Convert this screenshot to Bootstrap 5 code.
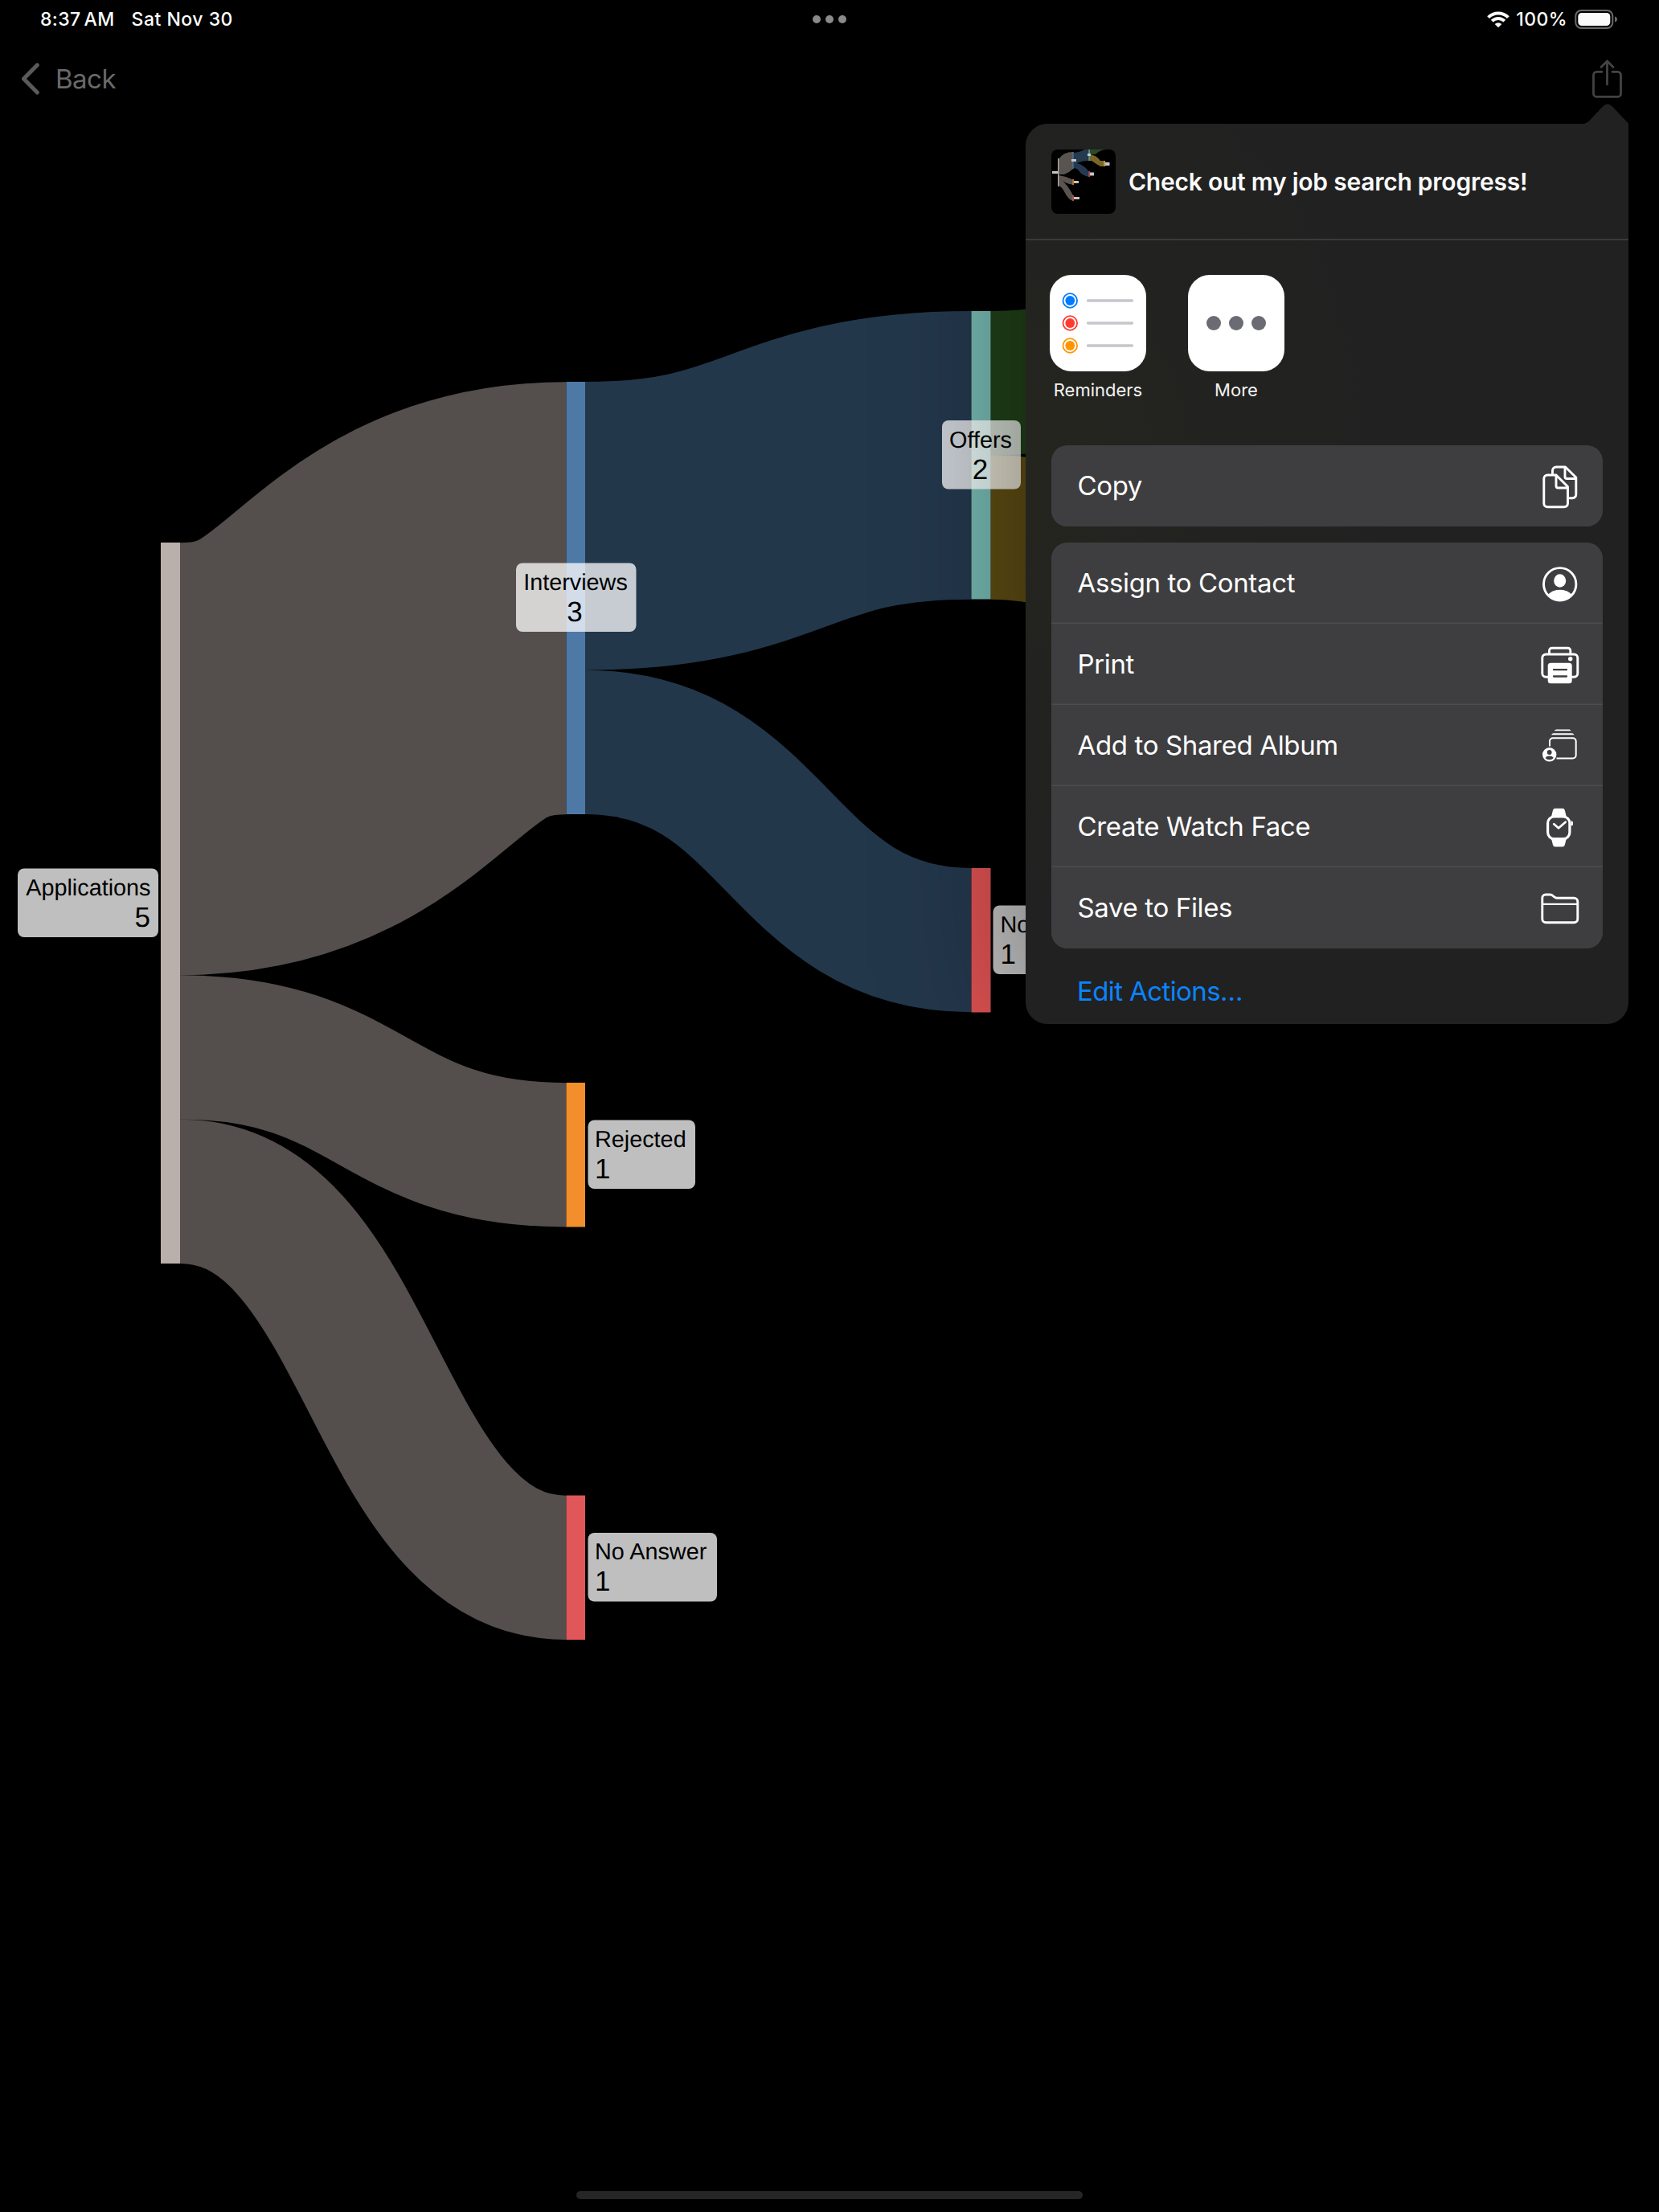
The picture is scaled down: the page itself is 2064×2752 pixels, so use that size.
<!DOCTYPE html>
<html lang="en" data-bs-theme="dark">
<head>
<meta charset="utf-8">
<meta name="viewport" content="width=device-width, initial-scale=1">
<title>Job Search Progress</title>
<link href="https://cdn.jsdelivr.net/npm/bootstrap@5.3.0/dist/css/bootstrap.min.css" rel="stylesheet">
<style>
  body { background:#000; font-family:Inter,"Noto Sans",sans-serif; width:2064px; height:2752px; overflow:hidden; color:#fff; }
  .statusbar { height:48px; padding:0 51px 0 50px; font-size:23px; font-weight:500; line-height:48px; }
  .clock { letter-spacing:.35px; margin-right:21px; }
  .today { letter-spacing:.5px; }
  .charge { letter-spacing:.4px; }
  .topbar { height:92px; padding:8px 45px 0 26px; }
  .back-link { font-size:33px; line-height:40px; letter-spacing:-.5px; color:#696969; text-decoration:none; }
  .flow { display:block; width:2064px; height:2560px; }
  .flow text { font-family:"Liberation Sans",Arial,sans-serif; fill:#000; text-rendering:geometricPrecision; }
  .flow .nm { font-size:28.8px; }
  .flow .ct { font-size:35px; }
  .homebar { width:630px; height:10px; border-radius:5px; background:#262626; margin:26px auto 0; }
  .sheet { position:absolute; left:1276px; top:154px; width:750px; height:1120px; border-radius:27px 0 27px 27px; background:radial-gradient(ellipse 420px 560px at 4% 38%,#25251f,#222320 50%,#212121 100%); box-shadow:0 0 180px rgba(0,0,0,.4); }
  .sheet-tip { position:absolute; right:0; top:-26px; }
  .sheet-head { height:145px; padding:0 32px; border-bottom:2px solid #393a3a; }
  .sheet-title { font-size:30px; font-weight:600; letter-spacing:-.24px; color:#fafafa; line-height:36px; margin-left:16px; }
  .apps { padding:43px 30px 0; gap:52px; height:255px; }
  .app-tile { width:120px; }
  .app-tile svg { display:block; }
  .app-name { font-size:22px; line-height:28px; margin-top:9px; color:#f2f2f2; }
  .actions { margin:0 32px; border-radius:20px; background:#3e3e40; overflow:hidden; --bs-list-group-bg:#3e3e40; --bs-list-group-border-width:0; }
  .actions .list-group-item { height:101px; padding:0 28px 0 32.5px; font-size:33px; letter-spacing:-.36px; color:#fff; background:#3e3e40; }
  .actions .list-group-item:not(:last-child) { box-shadow:inset 0 -1.5px #4c4c4e; }
  .edit-link { font-size:33px; line-height:40px; letter-spacing:-.6px; color:#0a84ff; text-decoration:none; margin:33px 0 0 64px; display:inline-block; }
</style>
</head>
<body class="d-flex flex-column position-relative">
<header>
  <div class="statusbar d-flex align-items-center justify-content-between position-relative">
    <div class="d-flex"><span class="clock">8:37&#8198;AM</span><span class="today">Sat Nov 30</span></div>
    <svg class="position-absolute" style="left:1010px;top:18px" width="44" height="12"><g fill="#8a8a8a"><circle cx="6" cy="6" r="5"/><circle cx="22" cy="6" r="5"/><circle cx="38" cy="6" r="5"/></g></svg>
    <div class="d-flex align-items-center">
      <svg width="30" height="22" viewBox="0 0 30 22" style="margin-right:7px"><g fill="none" stroke="#fff" stroke-width="4"><path d="M2.600 8.600A17.500 17.500 0 0 1 27.400 8.600"/><path d="M7.200 13.200A11 11 0 0 1 22.800 13.200"/></g><path d="M15 21.300l-4.300-4.400a6.100 6.100 0 0 1 8.600 0z" fill="#fff"/></svg>
      <span class="charge">100%</span>
      <svg width="54" height="26" viewBox="0 0 54 26" style="margin-left:9px"><rect x="1.300" y="2" width="46" height="22" rx="7" fill="none" stroke="#6c6c6c" stroke-width="2"/><rect x="4.300" y="5" width="40" height="16" rx="4.500" fill="#fff"/><path d="M50 9.500q3 1 3 3.500t-3 3.500z" fill="#6c6c6c"/></svg>
    </div>
  </div>
  <nav class="topbar d-flex align-items-center justify-content-between">
    <a href="#" class="back-link d-flex align-items-center"><svg width="25" height="42" viewBox="0 0 25 42" style="margin-right:18px"><path d="M20.300 4L3.500 21l16.800 17" fill="none" stroke="#5a5a5a" stroke-width="5" stroke-linecap="round" stroke-linejoin="round"/></svg><span>Back</span></a>
    <svg width="39" height="50" viewBox="0 0 39 50"><g fill="none" stroke="#484848" stroke-width="2.800" stroke-linecap="round" stroke-linejoin="round"><path d="M13 16.400H6.500a4 4 0 0 0-4 4v23a4 4 0 0 0 4 4h26a4 4 0 0 0 4-4v-23a4 4 0 0 0-4-4H26"/><path d="M19.500 32V3M12 10.500L19.500 3l7.500 7.500"/></g></svg>
  </nav>
</header>
<main>
  <svg class="flow" viewBox="0 140 2064 2560">
    <g fill="none" stroke="#bbb0a8" stroke-opacity=".45">
      <path stroke-width="538" d="M224 944.200C464 944.200 464 744.200 704.500 744.200"/>
      <path stroke-width="179.300" d="M224 1303C464 1303 464 1436.800 704.500 1436.800"/>
      <path stroke-width="179.300" d="M224 1482.300C464 1482.300 464 1950.300 704.500 1950.300"/>
    </g>
    <g fill="none" stroke="#4e79a7" stroke-opacity=".45">
      <path stroke-width="358.700" d="M728 654.300C968 654.300 968 566.300 1208.500 566.300"/>
      <path stroke-width="179.300" d="M728 923.300C968 923.300 968 1169.600 1208.500 1169.600"/>
    </g>
    <path fill="none" stroke="#1f3f18" stroke-width="179.300" d="M1232.500 476.600C1472.500 476.600 1472.500 330 1713 330"/>
    <path fill="none" stroke="#5c4b12" stroke-width="179.300" d="M1232.500 656C1472.500 656 1472.500 870 1713 870"/>
    <rect x="200" y="675" width="24" height="897" fill="#b9b0ab"/>
    <rect x="704.500" y="475" width="23.500" height="538" fill="#4e79a7"/>
    <rect x="704.500" y="1347" width="23.500" height="179.500" fill="#f28e2b"/>
    <rect x="704.500" y="1860.500" width="23.500" height="179.500" fill="#e15759"/>
    <rect x="1208.500" y="387" width="24" height="358.500" fill="#73b4ad"/>
    <rect x="1208.500" y="1080" width="24" height="179.500" fill="#da5050"/>
    <g fill="#fff" fill-opacity=".75">
      <rect x="22" y="1080.500" width="175" height="85.500" rx="8"/>
      <rect x="642" y="700.500" width="149.500" height="85.500" rx="8"/>
      <rect x="731.500" y="1393.500" width="133.500" height="85.500" rx="8"/>
      <rect x="731.500" y="1907" width="160.500" height="85.500" rx="8"/>
      <rect x="1172" y="523" width="98" height="85.500" rx="8"/>
      <rect x="1235.500" y="1126.500" width="160.500" height="85.500" rx="8"/>
    </g>
    <g class="nm">
      <text x="187.500" y="1114" text-anchor="end">Applications</text>
      <text x="716" y="734" text-anchor="middle">Interviews</text>
      <text x="740" y="1427">Rejected</text>
      <text x="740" y="1940">No Answer</text>
      <text x="1220" y="557" text-anchor="middle">Offers</text>
      <text x="1244.500" y="1160">No Answer</text>
    </g>
    <g class="ct">
      <text x="187" y="1153" text-anchor="end">5</text>
      <text x="715" y="773" text-anchor="middle">3</text>
      <text x="740" y="1466">1</text>
      <text x="740" y="1979">1</text>
      <text x="1219.500" y="595.500" text-anchor="middle">2</text>
      <text x="1244.500" y="1198.500">1</text>
    </g>
  </svg>
</main>
<div class="homebar"></div>

<section class="sheet">
  <svg class="sheet-tip" width="60" height="27" viewBox="0 0 60 27"><path d="M0 27V26.500Q7 26.500 11.500 22L28 4.500Q34 -1.500 40 4.500L57 22.500Q60 24.500 60 27z" fill="#212121"/></svg>
  <div class="sheet-head d-flex align-items-center">
    <svg width="80" height="80" viewBox="0 0 80 80"><defs><clipPath id="tc"><rect width="80" height="80" rx="8"/></clipPath></defs><g clip-path="url(#tc)"><rect width="80" height="80"/><path d="M9 12Q15 3 27 3V24Q22 29 16 31H9z" fill="#5a5451"/><path d="M9 32Q18 33 27 37.500V44Q16 42 12 37Q21 45 27 57V64Q21 62 17 54Q13 46 9 45z" fill="#5a5451"/><path d="M28 4Q36 3 42 0H47V14Q38 14 32 17Q42 20 47 28V34Q38 33 33 25Q30 23 28 23z" fill="#25394f"/><path d="M48 0H67Q60 1 55 6H48z" fill="#2b4a26"/><path d="M48 6Q56 7 61 14H66V21H61Q54 17 50 14H48z" fill="#7a6626"/><path d="M8 11h1.300v35H8z" fill="#b9b0ab"/><path d="M26.500 3h1.300v21h-1.300z" fill="#4e79a7"/><path d="M46.500 0h1.300v14h-1.300z" fill="#76b7b2"/><path d="M26.500 37h1.300v7h-1.300z" fill="#f28e2b"/><path d="M26.500 57h1.300v7h-1.300zM46.500 27h1.300v7h-1.300z" fill="#e15759"/><path d="M65.500 14h1.300v7h-1.300z" fill="#edc948"/><path d="M1 27h7v3H1zM25 12h6v3h-6zM45 5h4v3h-4zM28 39h6v3h-6zM28 59h7v3h-7zM48 28.500h5v4h-5zM67 16h5.500v4H67z" fill="#c6c6c6"/></g></svg>
    <div class="sheet-title">Check out my job search progress!</div>
  </div>
  <div class="apps d-flex">
    <div class="app-tile d-flex flex-column align-items-center">
      <svg width="120" height="120" viewBox="0 0 120 120"><rect width="120" height="120" rx="27" fill="#fff"/><g fill="none" stroke-width="1.800"><circle cx="25.300" cy="32" r="8.800" stroke="#007aff"/><circle cx="25.300" cy="60" r="8.800" stroke="#ff3b30"/><circle cx="25.300" cy="88" r="8.800" stroke="#ff9500"/></g><circle cx="25.300" cy="32" r="5.900" fill="#007aff"/><circle cx="25.300" cy="60" r="5.900" fill="#ff3b30"/><circle cx="25.300" cy="88" r="5.900" fill="#ff9500"/><path d="M47.500 32h55M47.500 60h55M47.500 88h55" stroke="#c6c6cb" stroke-width="3.300" stroke-linecap="round"/></svg>
      <div class="app-name">Reminders</div>
    </div>
    <div class="app-tile d-flex flex-column align-items-center">
      <svg width="120" height="120" viewBox="0 0 120 120"><rect width="120" height="120" rx="27" fill="#fff"/><g fill="#6b6b73"><circle cx="32" cy="60" r="9"/><circle cx="60" cy="60" r="9"/><circle cx="88" cy="60" r="9"/></g></svg>
      <div class="app-name">More</div>
    </div>
  </div>
  <div class="actions list-group">
    <a href="#" class="list-group-item d-flex align-items-center justify-content-between"><span>Copy</span>
      <svg width="50" height="60" viewBox="0 0 50 60" fill="none" stroke="#fff" stroke-width="2.900" stroke-linejoin="round" stroke-linecap="round"><path d="M20 16H9.300a4.500 4.500 0 0 0-4.500 4.500V51.200a4.500 4.500 0 0 0 4.500 4.500H30a4.500 4.500 0 0 0 4.500-4.500V30.500L20 16M20 16V29.500a2.500 2.500 0 0 0 2.500 2.500H34"/><path d="M15.500 14V10.500A4.500 4.500 0 0 1 20 6H31.500L44.800 19V40.200a4.500 4.500 0 0 1-4.500 4.500H37M31 6.500V18a2.500 2.500 0 0 0 2.500 2.500H44"/></svg></a>
  </div>
  <div class="actions list-group" style="margin-top:20px">
    <a href="#" class="list-group-item d-flex align-items-center justify-content-between"><span>Assign to Contact</span>
      <svg width="50" height="60" viewBox="0 0 50 60"><circle cx="24.700" cy="30.800" r="20.200" fill="none" stroke="#fff" stroke-width="2.900"/><ellipse cx="24.700" cy="26.500" rx="7.500" ry="8.200" fill="#fff"/><path d="M10 43.500Q16 37.800 24.700 37.800T39.400 43.500Q34 51.500 24.700 51.500T10 43.500z" fill="#fff"/></svg></a>
    <a href="#" class="list-group-item d-flex align-items-center justify-content-between"><span>Print</span>
      <svg width="50" height="60" viewBox="0 0 50 60"><g fill="none" stroke="#fff" stroke-width="2.900"><path d="M11 45.300H7.300a4.500 4.500 0 0 1-4.500-4.500V21.500A4.500 4.500 0 0 1 7.300 17H42.300a4.500 4.500 0 0 1 4.500 4.500V40.800a4.500 4.500 0 0 1-4.500 4.500H38"/><path d="M11.500 17V12.300a3 3 0 0 1 3-3H34.800a3 3 0 0 1 3 3V17"/></g><rect x="9.700" y="27.800" width="30" height="25.400" rx="3.500" fill="#fff"/><path d="M17 36.200H33M17 44.500H33" stroke="#3e3e40" stroke-width="2.300" stroke-linecap="round"/><circle cx="37.700" cy="22.800" r="2.700" fill="#fff"/></svg></a>
    <a href="#" class="list-group-item d-flex align-items-center justify-content-between"><span>Add to Shared Album</span>
      <svg width="50" height="60" viewBox="0 0 50 60"><g fill="none" stroke="#fff" stroke-width="2"><path d="M12 30.500V24.200a4 4 0 0 1 4-4H40.700a4 4 0 0 1 4 4V41.500a4 4 0 0 1-4 4H20.500"/></g><path d="M14 16.200q.8-2 3-2H39.500q2 0 3 2zM17.800 11.200q.6-1.600 2.500-1.600H36.300q1.600 0 2.200 1.600z" fill="#fff"/><circle cx="11.700" cy="40.800" r="8.700" fill="#fff"/><circle cx="11.700" cy="38" r="2.900" fill="#3e3e40"/><path d="M6.500 45Q8 42.600 11.700 42.600T16.900 45Q15 47.300 11.700 47.300T6.500 45z" fill="#3e3e40"/></svg></a>
    <a href="#" class="list-group-item d-flex align-items-center justify-content-between"><span>Create Watch Face</span>
      <svg width="50" height="60" viewBox="0 0 50 60"><path d="M14 17L16 9Q16.600 6.800 18.800 6.800H28Q30.200 6.800 30.800 9L32.800 17zM14 44.500L16 52.300Q16.600 54.500 18.800 54.500H28Q30.200 54.500 30.800 52.300L32.800 44.500z" fill="#fff"/><rect x="9.600" y="17" width="27.300" height="27.600" rx="8" fill="#3e3e40" stroke="#fff" stroke-width="3.200"/><path d="M38.500 22.200q2.500 0 2.500 2v2.300q0 2-2.500 2z" fill="#fff"/><path d="M17.300 26.200L23 31.300L31.700 23.700" fill="none" stroke="#fff" stroke-width="2.700" stroke-linecap="round" stroke-linejoin="round"/></svg></a>
    <a href="#" class="list-group-item d-flex align-items-center justify-content-between"><span>Save to Files</span>
      <svg width="50" height="60" viewBox="0 0 50 60" fill="none" stroke="#fff" stroke-width="2.900"><path d="M2.800 17A4 4 0 0 1 6.800 13H12.500Q14.500 13 16 14.500L18 16.200Q19.300 17.300 21 17.300H42.300a4.500 4.500 0 0 1 4.500 4.500V43.200a4.500 4.500 0 0 1-4.500 4.500H7.300a4.500 4.500 0 0 1-4.500-4.500z"/><path d="M3 24.800H46.500" stroke-width="2.300"/></svg></a>
  </div>
  <a href="#" class="edit-link">Edit Actions…</a>
</section>
<script src="https://cdn.jsdelivr.net/npm/bootstrap@5.3.0/dist/js/bootstrap.bundle.min.js"></script>
</body>
</html>
